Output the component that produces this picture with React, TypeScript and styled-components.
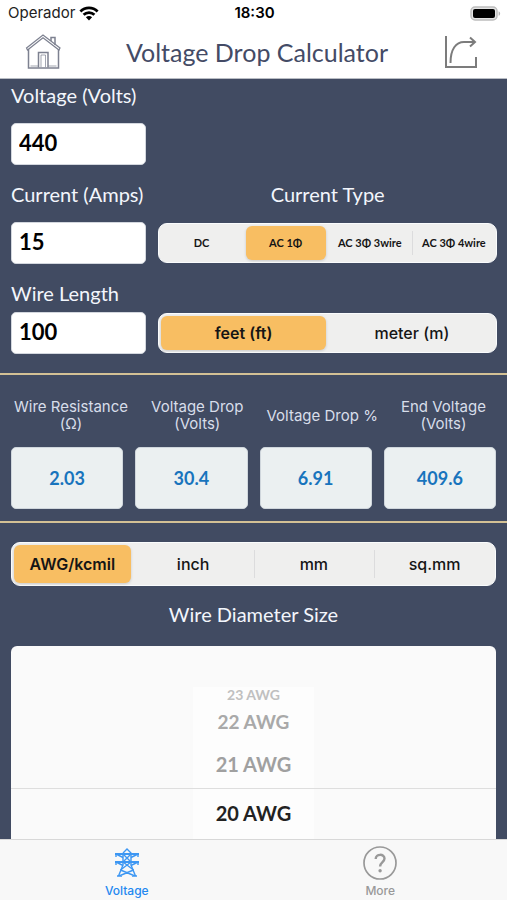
import React, { useState } from "react";
import styled, { createGlobalStyle, css } from "styled-components";

const AVENIR = 'Lato, Inter, sans-serif';
const SYSTEM = 'Inter, Roboto, sans-serif';

const GlobalStyle = createGlobalStyle`
  *, *::before, *::after { box-sizing: border-box; }
  body { margin: 0; background: #fff; }
  button, input { font: inherit; }
`;

const Screen = styled.div`
  display: flex;
  flex-direction: column;
  height: 100vh;
  overflow: hidden;
  background: #414b62;
  font-family: ${SYSTEM};
`;

const StatusBar = styled.div`
  display: grid;
  grid-template-columns: 1fr auto 1fr;
  align-items: center;
  height: 26px;
  padding: 0 6px 0 8px;
  background: #fff;
  color: #222;
  font-size: 15px;
  line-height: 26px;
`;

const Carrier = styled.span`
  display: flex;
  align-items: center;
  gap: 4px;
`;

const Clock = styled.time`
  color: #000;
  font-weight: 600;
`;

const BatteryIcon = styled.svg`
  justify-self: end;
`;

const Header = styled.header`
  display: flex;
  align-items: center;
  justify-content: space-between;
  height: 53px;
  padding: 0 25px 0 20px;
  background: #fff;
  border-bottom: 1px solid #b9bdc4;
`;

const Title = styled.h1`
  margin: 0;
  padding-left: 8px;
  color: #444b66;
  font: 400 25px/32px ${AVENIR};
`;

const IconButton = styled.button`
  display: flex;
  padding: 4px;
  border: 0;
  background: none;
  cursor: pointer;
`;

const Main = styled.main`
  flex: 1;
  min-height: 0;
  display: flex;
  flex-direction: column;
`;

const InputsSection = styled.section`
  display: flex;
  flex-direction: column;
  gap: 15px;
  padding: 2px 10px 19px 11px;
`;

const InputRow = styled.div<{ $compact?: boolean }>`
  display: grid;
  grid-template-columns: minmax(0, 2fr) minmax(0, 5fr);
  column-gap: 12px;
  row-gap: ${(p) => (p.$compact ? 5 : 14)}px;
  align-items: center;
`;

const labelText = css`
  color: #f3f6fc;
  font: 400 20px/28px ${AVENIR};
  white-space: nowrap;
`;

const FieldLabel = styled.label`
  ${labelText}
  grid-column: 1;
`;

const Heading = styled.h2`
  ${labelText}
  margin: 0;
  text-align: center;
`;

const NumberInput = styled.input`
  grid-column: 1;
  width: 100%;
  height: 42px;
  padding: 0 7px 4px;
  border: 1px solid #d3d7de;
  border-radius: 5px;
  background: #fff;
  color: #000;
  font: 700 22px/36px ${AVENIR};
`;

const Segments = styled.div<{ $tall?: boolean }>`
  display: flex;
  height: ${(p) => (p.$tall ? 44 : 40)}px;
  border: 1px solid #fafcfd;
  border-radius: 9px;
  background: #efefee;
`;

const Segment = styled.label<{ $divided?: boolean }>`
  position: relative;
  flex: 1 1 0;
  display: flex;
  padding: 2px;
  cursor: pointer;

  ${(p) =>
    p.$divided &&
    css`
      &::before {
        content: "";
        position: absolute;
        left: 0;
        top: 7px;
        bottom: 7px;
        width: 1px;
        background: #dcdcdd;
      }
    `}
`;

const SegmentFace = styled.span<{ $small?: boolean }>`
  flex: 1;
  display: flex;
  align-items: center;
  justify-content: center;
  border-radius: 6px;
  color: #151515;
  font: ${(p) => (p.$small ? `700 11px/20px ${AVENIR}` : `500 16px/20px ${SYSTEM}`)};
  white-space: nowrap;

  input:checked + & {
    background: #f8be62;
    font-weight: ${(p) => (p.$small ? 700 : 600)};
    box-shadow: 0 1px 3px rgba(0, 0, 0, 0.16);
  }
`;

const HiddenRadio = styled.input`
  position: absolute;
  inset: 0;
  margin: 0;
  opacity: 0;
  cursor: pointer;
`;

const Rule = styled.hr`
  flex: none;
  width: 100%;
  height: 2px;
  margin: 0;
  border: 0;
  background: #d3c195;
`;

const Results = styled.section`
  display: flex;
  flex-direction: column;
  gap: 14px;
  padding: 22px 11px 12px;
`;

const ResultLabels = styled.div`
  display: flex;
  justify-content: space-between;
  align-items: center;
  height: 36px;
  padding: 0 10px 0 3px;
`;

const ResultLabel = styled.label`
  color: #d8deea;
  font-size: 15px;
  line-height: 17px;
  text-align: center;
  white-space: pre;
`;

const ResultValues = styled.div`
  display: grid;
  grid-template-columns: repeat(4, minmax(0, 1fr));
  gap: 12px;
`;

const ResultValue = styled.output`
  display: flex;
  align-items: center;
  justify-content: center;
  height: 62px;
  border: 1px solid #cfd6dc;
  border-radius: 5px;
  background: #ebf0f1;
  color: #1874bd;
  font: 700 18px/24px ${AVENIR};
`;

const SizeSection = styled.section`
  flex: 1;
  min-height: 0;
  display: flex;
  flex-direction: column;
  padding: 19px 11px 0;
`;

const SizeHeading = styled(Heading)`
  margin: 14px 0 18px;
`;

const Picker = styled.ul`
  flex: 1;
  min-height: 0;
  display: flex;
  flex-direction: column;
  justify-content: flex-end;
  margin: 0;
  padding: 0;
  overflow: hidden;
  list-style: none;
  border-radius: 6px 6px 0 0;
  background: #fafafa;
`;

const wheelSteps = [
  { height: 51, size: 20, color: "#222" },
  { height: 47, size: 20, color: "#a0a0a0" },
  { height: 36, size: 19, color: "#a9a9a9" },
  { height: 18, size: 14, color: "#c0c0c0" },
];

const PickerItem = styled.li<{ $step: number }>`
  flex: none;
  display: flex;
  justify-content: center;
  height: ${(p) => wheelSteps[p.$step].height}px;
  border-top: ${(p) => (p.$step === 0 ? "1px solid #dedede" : "0")};
  color: ${(p) => wheelSteps[p.$step].color};
  font: 700 ${(p) => wheelSteps[p.$step].size}px / 16px ${AVENIR};
`;

const PickerText = styled.span`
  display: flex;
  align-items: center;
  justify-content: center;
  width: 25%;
  padding-bottom: 2px;
  background: #fdfdfd;
`;

const TabBar = styled.nav`
  flex: none;
  display: grid;
  grid-template-columns: 1fr 1fr;
  height: 61px;
  border-top: 1px solid #d8d8d8;
  background: #f8f8f8;
`;

const Tab = styled.a<{ $active?: boolean }>`
  display: flex;
  flex-direction: column;
  align-items: center;
  gap: 3px;
  padding-top: 6px;
  color: ${(p) => (p.$active ? "#2488f0" : "#999")};
  font-size: 12px;
  font-weight: 500;
  line-height: 16px;
  text-decoration: none;
`;

const WifiIcon = () => (
  <svg width="20" height="15" viewBox="0 0 20 15" fill="none" stroke="#000" strokeWidth="2.8" aria-hidden="true">
    <path d="M1.4 5.4C6.2.6 13.8.6 18.6 5.4" />
    <path d="M4.6 8.8C7.6 5.9 12.4 5.9 15.4 8.8" />
    <path d="M10 14.4 6.9 11.2C8.6 9.6 11.4 9.6 13.1 11.2Z" fill="#000" stroke="none" />
  </svg>
);

const Battery = () => (
  <BatteryIcon width="31" height="15" viewBox="0 0 31 15" aria-label="Battery full">
    <rect x="1" y="1" width="26" height="13" rx="4" fill="#e4e4e4" stroke="#bdbdbd" strokeWidth="1.5" />
    <rect x="3" y="3" width="22" height="9" rx="2" fill="#000" />
    <path d="M28.6 5.2c2 .8 2 3.8 0 4.6z" fill="#b5b5b5" />
  </BatteryIcon>
);

const HomeIcon = () => (
  <svg width="38" height="38" viewBox="0 0 38 38" fill="none" stroke="#7d8190" strokeWidth="1.5" aria-hidden="true">
    <path d="M4.5 16v19h30V16" />
    <path d="M2.5 15 19 2l17 13-1 2L19 4.8 3.5 17z" strokeWidth="1.2" />
    <path d="M27 8V4.5h4V12" />
    <path d="M14.5 34.5v-15H24v15" />
    <path d="M17 34V22h4.5v12" strokeWidth="0.7" />
    <path d="M6.5 33h8M24 33h8.5" strokeWidth="0.7" />
  </svg>
);

const ShareIcon = () => (
  <svg width="34" height="34" viewBox="0 0 34 34" fill="none" stroke="#7c7c7c" strokeWidth="2" aria-hidden="true">
    <path d="M2 1v31h30V22" />
    <path d="M6.5 28C6.5 14 12 7 20 7h11" />
    <path d="m26 2.5 5 4.5-5 4.5" />
  </svg>
);

const TowerIcon = () => (
  <svg width="32" height="34" viewBox="0 0 32 34" fill="none" stroke="#3d97f3" strokeWidth="1.4" aria-hidden="true">
    <path d="m12 7 4-4 4 4v12l4.500 11M12 7v12L7.500 30" />
    <path d="M4 8h24M4 16h24" strokeWidth="2" />
    <path d="m5 8 7 3.500M27 8l-7 3.500M5 16l7 3.500M27 16l-7 3.500" />
    <path d="m12 8 8 8m0-8-8 8M12 16l10.500 8m-2.500-8L9.500 24" />
    <path d="m9.500 24 14.500 6M22.500 24 8 30M6 30h5m10 0h5" />
    <path d="M5 8v3M27 8v3M5 16v3M27 16v3" />
  </svg>
);

const HelpIcon = () => (
  <svg width="34" height="34" viewBox="0 0 34 34" fill="none" stroke="#999" aria-hidden="true">
    <circle cx="17" cy="17" r="16" strokeWidth="1.7" />
    <path d="M12.700 13c0-5.500 8.800-5.500 8.800-.4 0 3.500-4.400 3.600-4.400 7.900" strokeWidth="2.4" />
    <circle cx="17.100" cy="24.700" r="1.700" fill="#999" stroke="none" />
  </svg>
);

interface SegmentedProps {
  name: string;
  label: string;
  options: string[];
  initial: number;
  small?: boolean;
  tall?: boolean;
}

function SegmentedControl({ name, label, options, initial, small, tall }: SegmentedProps) {
  const [selected, setSelected] = useState(initial);
  return (
    <Segments role="radiogroup" aria-label={label} $tall={tall}>
      {options.map((option, i) => (
        <Segment key={option} $divided={i > 0 && i !== selected && i - 1 !== selected}>
          <HiddenRadio type="radio" name={name} checked={i === selected} onChange={() => setSelected(i)} />
          <SegmentFace $small={small}>{option}</SegmentFace>
        </Segment>
      ))}
    </Segments>
  );
}

const results = [
  { id: "resistance", label: "Wire Resistance\n(Ω)", value: "2.03" },
  { id: "drop", label: "Voltage Drop\n(Volts)", value: "30.4" },
  { id: "drop-percent", label: "Voltage Drop %", value: "6.91" },
  { id: "end-voltage", label: "End Voltage\n(Volts)", value: "409.6" },
];

const gauges = ["23 AWG", "22 AWG", "21 AWG", "20 AWG"];

export default function App() {
  return (
    <Screen>
      <GlobalStyle />
      <StatusBar>
        <Carrier>
          Operador
          <WifiIcon />
        </Carrier>
        <Clock>18:30</Clock>
        <Battery />
      </StatusBar>
      <Header>
        <IconButton type="button" aria-label="Home">
          <HomeIcon />
        </IconButton>
        <Title>Voltage Drop Calculator</Title>
        <IconButton type="button" aria-label="Share">
          <ShareIcon />
        </IconButton>
      </Header>
      <Main>
        <InputsSection>
          <InputRow>
            <FieldLabel htmlFor="voltage">Voltage (Volts)</FieldLabel>
            <NumberInput id="voltage" inputMode="decimal" defaultValue="440" />
          </InputRow>
          <InputRow>
            <FieldLabel htmlFor="current">Current (Amps)</FieldLabel>
            <Heading>Current Type</Heading>
            <NumberInput id="current" inputMode="decimal" defaultValue="15" />
            <SegmentedControl
              name="current-type"
              label="Current Type"
              options={["DC", "AC 1Φ", "AC 3Φ 3wire", "AC 3Φ 4wire"]}
              initial={1}
              small
            />
          </InputRow>
          <InputRow $compact>
            <FieldLabel htmlFor="length">Wire Length</FieldLabel>
            <NumberInput id="length" inputMode="decimal" defaultValue="100" />
            <SegmentedControl name="length-unit" label="Length unit" options={["feet (ft)", "meter (m)"]} initial={0} />
          </InputRow>
        </InputsSection>
        <Rule />
        <Results>
          <ResultLabels>
            {results.map((r) => (
              <ResultLabel key={r.id} htmlFor={r.id}>
                {r.label}
              </ResultLabel>
            ))}
          </ResultLabels>
          <ResultValues>
            {results.map((r) => (
              <ResultValue key={r.id} id={r.id}>
                {r.value}
              </ResultValue>
            ))}
          </ResultValues>
        </Results>
        <Rule />
        <SizeSection>
          <SegmentedControl
            name="size-unit"
            label="Size unit"
            options={["AWG/kcmil", "inch", "mm", "sq.mm"]}
            initial={0}
            tall
          />
          <SizeHeading>Wire Diameter Size</SizeHeading>
          <Picker role="listbox" aria-label="Wire Diameter Size">
            {gauges.map((gauge, i) => {
              const step = gauges.length - 1 - i;
              return (
                <PickerItem key={gauge} role="option" aria-selected={step === 0} $step={step}>
                  <PickerText>{gauge}</PickerText>
                </PickerItem>
              );
            })}
          </Picker>
        </SizeSection>
      </Main>
      <TabBar>
        <Tab href="#voltage" $active aria-current="page">
          <TowerIcon />
          Voltage
        </Tab>
        <Tab href="#more">
          <HelpIcon />
          More
        </Tab>
      </TabBar>
    </Screen>
  );
}
